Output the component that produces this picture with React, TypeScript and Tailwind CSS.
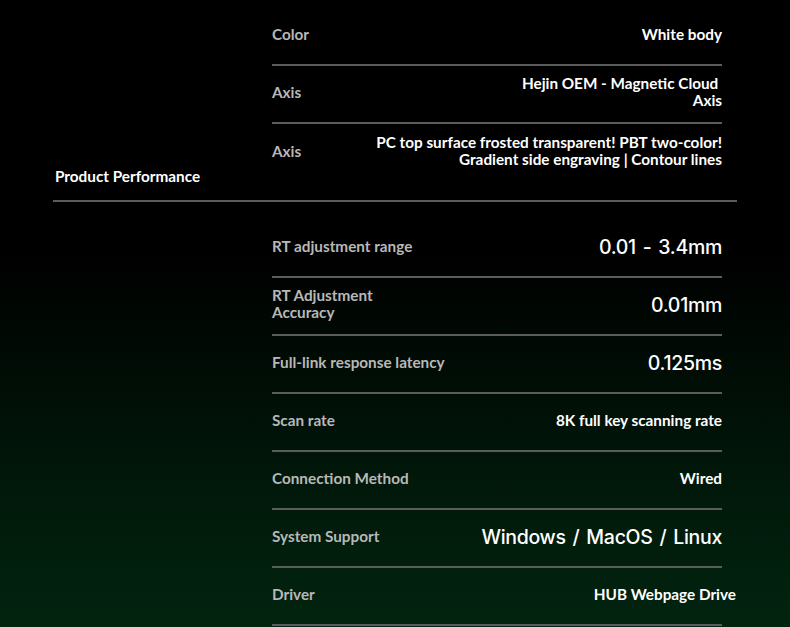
type Spec = {
  label: React.ReactNode;
  value: React.ReactNode;
  big?: boolean;
  last?: boolean;
  valueClass?: string;
};

const lato = { fontFamily: "Lato, 'Liberation Sans', sans-serif" };
const display = { fontFamily: "Inter, 'Noto Sans', sans-serif" };

function Row({ label, value, big, last, valueClass = "" }: Spec) {
  return (
    <div
      className={`flex h-[58px] items-center justify-between pb-1 ${
        last ? "" : "border-b-2 border-[#5c5c5c]"
      }`}
    >
      <div className="text-[15.3px] font-bold leading-[17px] text-[#b8b8b8]" style={lato}>
        {label}
      </div>
      {big ? (
        <div
          className={`pt-1 text-[19.5px] font-medium tracking-[-0.3px] text-white [word-spacing:2px] ${valueClass}`}
          style={display}
        >
          {value}
        </div>
      ) : (
        <div
          className={`text-right text-[15.3px] font-bold leading-[17px] text-white ${valueClass}`}
          style={lato}
        >
          {value}
        </div>
      )}
    </div>
  );
}

export default function App() {
  return (
    <div className="h-[627px] w-[790px] overflow-hidden bg-[linear-gradient(to_bottom,#000_0%,#000_40%,#011a0b_80%,#01240f_100%)]">
      <div className="ml-[53px] w-[684px]">
        {/* appearance block */}
        <section className="flex border-b-2 border-[#5c5c5c] pb-[18px] pt-[8px]">
          <div className="flex w-[219px] items-end">
            <p className="mb-[-6px] ml-[2px] text-[15.3px] font-bold text-white" style={lato}>
              Product Performance
            </p>
          </div>
          <div className="w-[450px]">
            <Row label="Color" value="White body" />
            <Row
              label="Axis"
              value={
                <>
                  Hejin OEM - Magnetic Cloud&nbsp;
                  <br />
                  Axis
                </>
              }
            />
            <Row
              label="Axis"
              last
              value={
                <>
                  PC top surface frosted transparent! PBT two-color!
                  <br />
                  Gradient side engraving | Contour lines
                </>
              }
            />
          </div>
        </section>

        {/* performance block */}
        <section className="flex pt-[18px]">
          <div className="w-[219px]" />
          <div className="w-[450px]">
            <Row label="RT adjustment range" value="0.01 - 3.4mm" big />
            <Row
              label={
                <>
                  RT Adjustment
                  <br />
                  Accuracy
                </>
              }
              value="0.01mm"
              big
            />
            <Row label="Full-link response latency" value="0.125ms" big />
            <Row label="Scan rate" value="8K full key scanning rate" />
            <Row label="Connection Method" value="Wired" />
            <Row label="System Support" value="Windows / MacOS / Linux" big />
            <Row label="Driver" value="HUB Webpage Drive" valueClass="mr-[-14px]" />
          </div>
        </section>
      </div>
    </div>
  );
}
